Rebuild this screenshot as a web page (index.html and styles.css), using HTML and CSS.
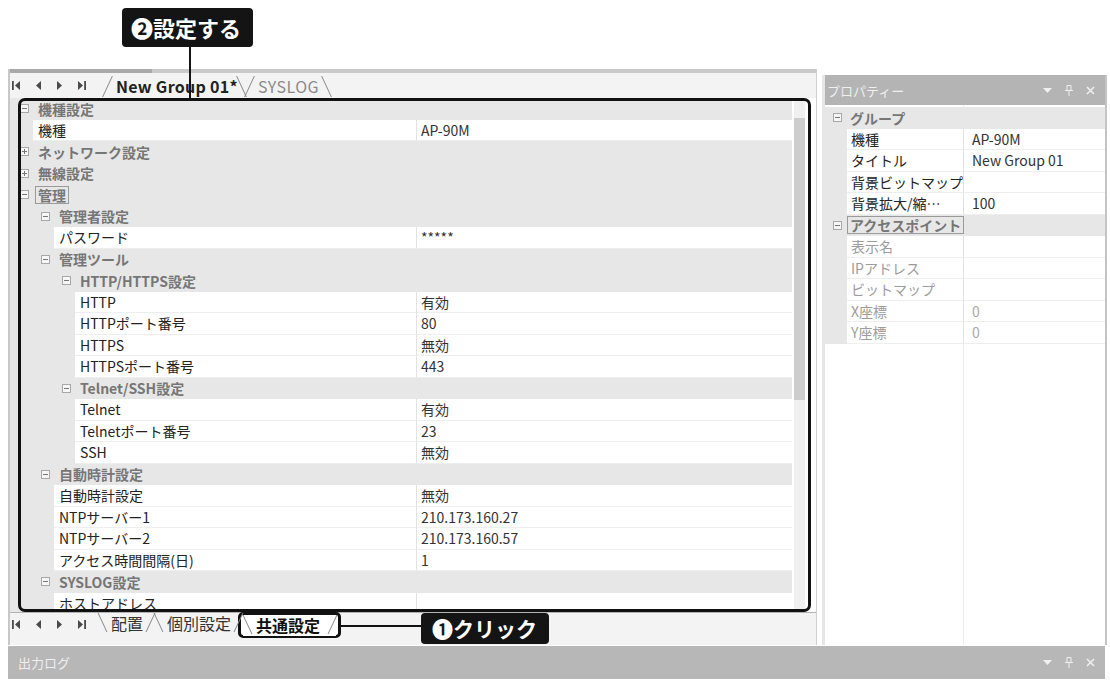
FILE: index.html
```html
<!DOCTYPE html>
<html lang="ja">
<head>
  <meta charset="UTF-8" />
  <meta name="viewport" content="width=device-width, initial-scale=1.0"/>
  <title>共通設定</title>
  <link rel="stylesheet" href="styles.css">
</head>
<body>
  <div class="top">
    <div class="callout callout-set">❷設定する</div>
  </div>

  <div class="workspace">
    <div class="doc">
      <div class="doc-top"></div>
      <div class="doc-tabs">
        <div class="nav">
          <svg width="8" height="9" viewBox="0 0 8 9"><path d="M0 0h1.8v9H0z M8 0v9L3 4.5z"/></svg>
          <svg width="5" height="9" viewBox="0 0 5 9"><path d="M5 0v9L0 4.5z"/></svg>
          <svg width="5" height="9" viewBox="0 0 5 9"><path d="M0 0v9l5-4.5z"/></svg>
          <svg width="8" height="9" viewBox="0 0 8 9"><path d="M0 0v9l5-4.5z M6.2 0H8v9H6.2z"/></svg>
        </div>
        <div class="tab active">New Group 01*</div>
        <div class="tab">SYSLOG</div>
      </div>

      <div class="grid-wrap">
        <div class="grid">
          <div class="row cat l0"><span class="box"></span>機種設定</div>
          <div class="row prop l0"><div class="name"><span class="gut"></span><span class="label">機種</span></div><span class="value">AP-90M</span></div>
          <div class="row cat l0"><span class="box plus"></span>ネットワーク設定</div>
          <div class="row cat l0"><span class="box plus"></span>無線設定</div>
          <div class="row cat l0"><span class="box"></span><span class="focus">管理</span></div>
          <div class="row cat l1"><span class="box"></span>管理者設定</div>
          <div class="row prop l1"><div class="name"><span class="gut"></span><span class="label">パスワード</span></div><span class="value">*****</span></div>
          <div class="row cat l1"><span class="box"></span>管理ツール</div>
          <div class="row cat l2"><span class="box"></span>HTTP/HTTPS設定</div>
          <div class="row prop l2"><div class="name"><span class="gut"></span><span class="label">HTTP</span></div><span class="value">有効</span></div>
          <div class="row prop l2"><div class="name"><span class="gut"></span><span class="label">HTTPポート番号</span></div><span class="value">80</span></div>
          <div class="row prop l2"><div class="name"><span class="gut"></span><span class="label">HTTPS</span></div><span class="value">無効</span></div>
          <div class="row prop l2"><div class="name"><span class="gut"></span><span class="label">HTTPSポート番号</span></div><span class="value">443</span></div>
          <div class="row cat l2"><span class="box"></span>Telnet/SSH設定</div>
          <div class="row prop l2"><div class="name"><span class="gut"></span><span class="label">Telnet</span></div><span class="value">有効</span></div>
          <div class="row prop l2"><div class="name"><span class="gut"></span><span class="label">Telnetポート番号</span></div><span class="value">23</span></div>
          <div class="row prop l2"><div class="name"><span class="gut"></span><span class="label">SSH</span></div><span class="value">無効</span></div>
          <div class="row cat l1"><span class="box"></span>自動時計設定</div>
          <div class="row prop l1"><div class="name"><span class="gut"></span><span class="label">自動時計設定</span></div><span class="value">無効</span></div>
          <div class="row prop l1"><div class="name"><span class="gut"></span><span class="label">NTPサーバー1</span></div><span class="value">210.173.160.27</span></div>
          <div class="row prop l1"><div class="name"><span class="gut"></span><span class="label">NTPサーバー2</span></div><span class="value">210.173.160.57</span></div>
          <div class="row prop l1"><div class="name"><span class="gut"></span><span class="label">アクセス時間間隔(日)</span></div><span class="value">1</span></div>
          <div class="row cat l1"><span class="box"></span>SYSLOG設定</div>
          <div class="row prop l1"><div class="name"><span class="gut"></span><span class="label">ホストアドレス</span></div><span class="value"></span></div>
        </div>
        <div class="scrollbar"><div class="thumb"></div></div>
        <div class="highlight"></div>
      </div>

      <div class="sheet-tabs">
        <div class="nav">
          <svg width="8" height="9" viewBox="0 0 8 9"><path d="M0 0h1.8v9H0z M8 0v9L3 4.5z"/></svg>
          <svg width="5" height="9" viewBox="0 0 5 9"><path d="M5 0v9L0 4.5z"/></svg>
          <svg width="5" height="9" viewBox="0 0 5 9"><path d="M0 0v9l5-4.5z"/></svg>
          <svg width="8" height="9" viewBox="0 0 8 9"><path d="M0 0v9l5-4.5z M6.2 0H8v9H6.2z"/></svg>
        </div>
        <div class="stab">配置</div>
        <div class="stab">個別設定</div>
        <div class="mark"><div class="stab active">共通設定</div></div>
        <div class="link"></div>
        <div class="callout callout-click">❶クリック</div>
      </div>
    </div>

    <div class="props">
      <div class="panel-head">
        <span>プロパティー</span>
        <div class="tools">
          <svg width="9" height="5" viewBox="0 0 9 5"><path d="M0 0h9L4.5 5z" fill="#f0f0f0"/></svg>
          <svg width="8" height="11" viewBox="0 0 8 11"><path d="M2 .5h4v5H2z M0 5.5h8 M4 5.5V11" stroke="#f0f0f0" fill="none"/></svg>
          <svg width="9" height="9" viewBox="0 0 9 9"><path d="M1 1l7 7M8 1l-7 7" stroke="#f0f0f0" stroke-width="1.5"/></svg>
        </div>
      </div>
      <div class="props-body">
        <div class="prow cat"><span class="box"></span>グループ</div>
        <div class="prow prop"><span class="gut"></span><span class="label">機種</span><span class="value">AP-90M</span></div>
        <div class="prow prop"><span class="gut"></span><span class="label">タイトル</span><span class="value">New Group 01</span></div>
        <div class="prow prop"><span class="gut"></span><span class="label">背景ビットマップ</span><span class="value"></span></div>
        <div class="prow prop"><span class="gut"></span><span class="label">背景拡大/縮…</span><span class="value">100</span></div>
        <div class="prow cat"><span class="box"></span><span class="focus">アクセスポイント</span></div>
        <div class="prow prop off"><span class="gut"></span><span class="label">表示名</span><span class="value"></span></div>
        <div class="prow prop off"><span class="gut"></span><span class="label">IPアドレス</span><span class="value"></span></div>
        <div class="prow prop off"><span class="gut"></span><span class="label">ビットマップ</span><span class="value"></span></div>
        <div class="prow prop off"><span class="gut"></span><span class="label">X座標</span><span class="value">0</span></div>
        <div class="prow prop off"><span class="gut"></span><span class="label">Y座標</span><span class="value">0</span></div>
      </div>
    </div>
  </div>

  <div class="output">
    <span>出力ログ</span>
    <div class="tools">
      <svg width="9" height="5" viewBox="0 0 9 5"><path d="M0 0h9L4.5 5z" fill="#f0f0f0"/></svg>
      <svg width="8" height="11" viewBox="0 0 8 11"><path d="M2 .5h4v5H2z M0 5.5h8 M4 5.5V11" stroke="#f0f0f0" fill="none"/></svg>
      <svg width="9" height="9" viewBox="0 0 9 9"><path d="M1 1l7 7M8 1l-7 7" stroke="#f0f0f0" stroke-width="1.5"/></svg>
    </div>
  </div>
</body>
</html>
```

FILE: styles.css
```css
body {
  margin: 0;
  background: #fff;
  font-family: "Noto Sans CJK JP", "DejaVu Sans", sans-serif;
  font-size: 14px;
  color: #222;
}
.top {
  height: 69px;
  box-sizing: border-box;
  padding: 8px 0 0 122px;
}
.callout {
  display: inline-block;
  position: relative;
  z-index: 5;
  background: #141414;
  color: #fff;
  font-weight: bold;
  font-size: 22px;
  line-height: 39px;
  padding: 0 12px 0 9px;
  border-radius: 4px;
  white-space: nowrap;
}
.callout-set::after {
  content: "";
  position: absolute;
  left: 67px;
  top: 100%;
  width: 2px;
  height: 53px;
  background: #141414;
}
.workspace {
  display: flex;
  gap: 5px;
  height: 576px;
  padding-left: 8px;
}
.doc {
  width: 809px;
  flex: none;
  display: flex;
  flex-direction: column;
  box-sizing: border-box;
  border-left: 2px solid #c8c8c8;
  border-right: 1px solid #d0d0d0;
  background: #f3f3f3;
}
.doc-top {
  height: 4px;
  background: linear-gradient(to right, #a9a9a9 142px, #c9c9c9 142px);
}
.doc-tabs {
  height: 25px;
  display: flex;
  align-items: center;
  padding-left: 2px;
}
.nav {
  width: 90px;
  flex: none;
  display: flex;
  align-items: center;
  gap: 16px;
  fill: #4a4a4a;
}
.tab {
  position: relative;
  padding: 1px 10px 0 14px;
  font-size: 16px;
  line-height: 22px;
  color: #8a8a8a;
  letter-spacing: 0.5px;
}
.tab.active {
  font-weight: bold;
  color: #222;
  letter-spacing: 0.3px;
  padding-right: 6px;
}
.tab::before,
.tab::after,
.stab::before,
.stab::after {
  content: "";
  position: absolute;
  top: 2px;
  bottom: 0;
  border-left: 1px solid #888;
}
.tab::before {
  left: 5px;
  transform: skewX(-25deg);
}
.tab::after {
  right: 2px;
  transform: skewX(25deg);
}
.grid-wrap {
  position: relative;
  height: 514px;
  display: flex;
  background: #fff;
}
.grid {
  flex: 1;
  overflow: hidden;
}
.scrollbar {
  width: 11px;
  flex: none;
  margin: 0 11px 0 2px;
  background: #f0f0f0;
}
.thumb {
  margin-top: 20px;
  height: 282px;
  background: #cdcdcd;
}
.highlight {
  position: absolute;
  left: 8px;
  right: 5px;
  top: 0;
  bottom: 0;
  border: 3px solid #111;
  border-radius: 7px;
  pointer-events: none;
}
.row {
  height: 21.5px;
  display: flex;
  align-items: center;
  white-space: nowrap;
  box-sizing: border-box;
}
.cat {
  background: #e7e7e7;
  color: #767676;
  font-weight: bold;
}
.cat.l0 { padding-left: 10px; }
.cat.l1 { padding-left: 31px; }
.cat.l2 { padding-left: 52px; }
.box {
  width: 9px;
  height: 9px;
  flex: none;
  box-sizing: border-box;
  border: 1px solid #a8a8a8;
  background: #f6f6f6;
  margin-right: 9px;
  position: relative;
}
.box::before {
  content: "";
  position: absolute;
  left: 1px;
  right: 1px;
  top: 3px;
  height: 1px;
  background: #777;
}
.box.plus::after {
  content: "";
  position: absolute;
  top: 1px;
  bottom: 1px;
  left: 3px;
  width: 1px;
  background: #777;
}
.focus {
  border: 1px solid #9a9a9a;
  padding: 0 2px;
  margin-left: -3px;
  line-height: 16px;
}
.prop {
  align-items: stretch;
  background: #fff;
}
.prop .name {
  width: 406px;
  flex: none;
  display: flex;
}
.gut {
  flex: none;
  background: #e7e7e7;
}
.l0 .gut { width: 23px; }
.l1 .gut { width: 44px; }
.l2 .gut { width: 65px; }
.prop .label,
.prop .value {
  line-height: 20.5px;
  border-bottom: 1px solid #eeeeee;
}
.prop .label {
  flex: 1;
  padding-left: 5px;
}
.prop .value {
  flex: 1;
  padding-left: 4px;
  border-left: 1px solid #e2e2e2;
  color: #333;
}
.sheet-tabs {
  height: 24px;
  display: flex;
  align-items: flex-start;
  border-top: 1px solid #b4b4b4;
  padding-left: 2px;
}
.sheet-tabs .nav {
  width: 86px;
  height: 22px;
}
.stab {
  position: relative;
  padding: 0 11px 0 13px;
  line-height: 21px;
  font-size: 16px;
  color: #333;
}
.stab::before {
  top: 0;
  bottom: 2px;
  left: 4px;
  transform: skewX(25deg);
}
.stab::after {
  top: 0;
  bottom: 2px;
  right: 3px;
  transform: skewX(-25deg);
}
.stab.active {
  font-weight: bold;
  color: #111;
  background: #fff;
  padding-right: 16px;
}
.mark {
  height: 26px;
  box-sizing: border-box;
  margin: -1px 0 0 -4px;
  padding: 0 2px;
  display: flex;
  align-items: center;
  border: 3px solid #111;
  border-radius: 5px;
  background: #fff;
}
.link {
  width: 80px;
  height: 2px;
  margin-top: 12px;
  background: #111;
}
.callout-click {
  line-height: 31px;
  font-size: 21px;
  padding: 0 12px 0 11px;
}
.props {
  width: 285px;
  flex: none;
  margin-top: 6px;
  display: flex;
  flex-direction: column;
  box-sizing: border-box;
  border-left: 3px solid #e6e6e6;
  border-right: 2px solid #c4c4c4;
  background: #fff;
}
.panel-head {
  height: 30px;
  flex: none;
  display: flex;
  align-items: center;
  padding: 0 10px 0 2px;
  background: #b4b4b4;
  color: #efefef;
  font-size: 13px;
}
.tools {
  margin-left: auto;
  display: flex;
  align-items: center;
  gap: 13px;
}
.props-body {
  flex: 1;
  padding-top: 2px;
  background: linear-gradient(to right, transparent 138px, #ececec 138px, #ececec 139px, transparent 139px);
}
.prow {
  height: 21.5px;
  display: flex;
  align-items: center;
  white-space: nowrap;
}
.prow.cat {
  padding-left: 8px;
}
.prow.cat .box {
  margin-right: 8px;
}
.prow.prop {
  align-items: stretch;
}
.prow .gut {
  width: 22px;
}
.prow .label {
  width: 116px;
  flex: none;
  box-sizing: border-box;
  padding-left: 4px;
  overflow: hidden;
}
.prow .value {
  padding-left: 8px;
}
.prow.off {
  color: #9c9c9c;
}
.prow.off .value {
  color: #a8a8a8;
}
.output {
  margin: 1px 5px 0 8px;
  height: 33px;
  display: flex;
  align-items: center;
  padding: 0 10px;
  background: #b7b7b7;
  color: #eeeeee;
  font-size: 13px;
}
```
